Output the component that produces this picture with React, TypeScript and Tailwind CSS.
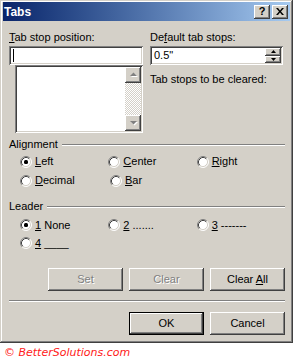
import React from 'react';

const raised =
  'shadow-[inset_-1px_-1px_#404040,inset_1px_1px_#ffffff,inset_-2px_-2px_#808080,inset_2px_2px_#d4d0c8]';
const sunken =
  'shadow-[inset_1px_1px_#808080,inset_-1px_-1px_#ffffff,inset_2px_2px_#404040,inset_-2px_-2px_#d4d0c8]';
const disabledText = 'text-[#808080] [text-shadow:1px_1px_0_#ffffff]';

function Radio({ checked }: { checked?: boolean }) {
  return (
    <svg width="12" height="12" viewBox="0 0 12 12" className="shrink-0">
      <circle cx="6" cy="6" r="5" fill="#ffffff" />
      <path d="M2.11 9.89A5.5 5.5 0 0 1 9.89 2.11" fill="none" stroke="#808080" />
      <path d="M9.89 2.11A5.5 5.5 0 0 1 2.11 9.89" fill="none" stroke="#ffffff" />
      <path d="M2.82 9.18A4.5 4.5 0 0 1 9.18 2.82" fill="none" stroke="#404040" />
      <path d="M9.18 2.82A4.5 4.5 0 0 1 2.82 9.18" fill="none" stroke="#d4d0c8" />
      {checked && <rect x="4" y="4" width="4" height="4" rx="1.5" fill="#000000" />}
    </svg>
  );
}

function Option({ checked, label }: { checked?: boolean; label: React.ReactNode }) {
  return (
    <div className="flex items-center gap-[3px] w-[90px]">
      <Radio checked={checked} />
      <span className="leading-[13px]">{label}</span>
    </div>
  );
}

function GroupHeader({ title }: { title: string }) {
  return (
    <div className="flex items-center gap-[4px] h-[13px]">
      <span className="leading-[13px]">{title}</span>
      <div className="flex-1 h-[2px] border-t border-[#808080] border-b border-b-white" />
    </div>
  );
}

function Button({
  children,
  disabled,
  isDefault,
}: {
  children: React.ReactNode;
  disabled?: boolean;
  isDefault?: boolean;
}) {
  if (isDefault) {
    return (
      <div className="w-[75px] h-[23px] border border-black">
        <div className={`w-full h-full flex items-center justify-center bg-[#d4d0c8] ${raised}`}>
          <span>{children}</span>
        </div>
      </div>
    );
  }
  return (
    <div
      className={`w-[75px] h-[23px] flex items-center justify-center bg-[#d4d0c8] ${raised} ${
        disabled ? disabledText : ''
      }`}
    >
      <span>{children}</span>
    </div>
  );
}

function ScrollArrow({ up }: { up?: boolean }) {
  return (
    <div className={`w-[16px] h-[16px] bg-[#d4d0c8] flex items-center justify-center ${raised}`}>
      <svg width="9" height="6" viewBox="0 0 9 6">
        {up ? (
          <>
            <path d="M2 5h7L5.5 1.5z" fill="#ffffff" />
            <path d="M1 4h7L4.5 0.5z" fill="#808080" />
          </>
        ) : (
          <>
            <path d="M2 2h7L5.5 5.5z" fill="#ffffff" />
            <path d="M1 1h7L4.5 4.5z" fill="#808080" />
          </>
        )}
      </svg>
    </div>
  );
}

export default function App() {
  return (
    <div className="w-[294px] h-[359px] bg-white text-[11px] text-black font-['Liberation_Sans',Arial,sans-serif] overflow-hidden">
      {/* dialog */}
      <div className="w-[293px] h-[343px] bg-[#d4d0c8] pt-[2px] px-[3px] shadow-[inset_-1px_-1px_#404040,inset_1px_1px_#d4d0c8,inset_-2px_-2px_#808080,inset_2px_2px_#ffffff]">
        {/* title bar */}
        <div className="h-[19px] flex items-center justify-between pl-[1px] pr-[2px] bg-linear-to-r from-[#0a246a] to-[#a6caf0]">
          <span className="font-bold text-white text-[12px] leading-[14px]">Tabs</span>
          <div className="flex items-center gap-[2px]">
            <div className={`w-[16px] h-[14px] bg-[#d4d0c8] flex items-center justify-center ${raised}`}>
              <span className="font-bold text-[11px] leading-[11px] pb-[1px]">?</span>
            </div>
            <div className={`w-[16px] h-[14px] bg-[#d4d0c8] flex items-center justify-center ${raised}`}>
              <svg width="8" height="7" viewBox="0 0 8 7">
                <path d="M0 0h2l2 2.5L6 0h2L5 3.5 8 7H6L4 4.5 2 7H0l3-3.5z" fill="#000000" />
              </svg>
            </div>
          </div>
        </div>

        {/* body */}
        <div className="pl-[6px] pr-[5px]">
          <div className="flex gap-[7px] pt-[10px]">
            {/* left column */}
            <div className="w-[134px]">
              <div className="leading-[13px]">
                <u>T</u>ab stop position:
              </div>
              <div className={`mt-[2px] h-[19px] bg-white ${sunken} flex items-center pl-[4px]`}>
                <div className="w-px h-[13px] bg-black" />
              </div>
              <div className={`ml-[6px] h-[68px] bg-white ${sunken} p-[2px] flex justify-end`}>
                <div className="w-[16px] flex flex-col bg-[repeating-conic-gradient(#d4d0c8_0_25%,#ffffff_0_50%)] bg-[length:2px_2px]">
                  <ScrollArrow up />
                  <div className="flex-1" />
                  <ScrollArrow />
                </div>
              </div>
            </div>

            {/* right column */}
            <div className="w-[134px]">
              <div className="leading-[13px]">
                De<u>f</u>ault tab stops:
              </div>
              <div className={`mt-[2px] w-[133px] h-[19px] bg-white ${sunken} flex items-center justify-between pl-[4px] pr-[2px]`}>
                <span className="leading-[13px]">0.5"</span>
                <div className="flex flex-col h-[15px] w-[16px]">
                  <div className={`flex-1 bg-[#d4d0c8] flex items-center justify-center ${raised}`}>
                    <svg width="5" height="3" viewBox="0 0 5 3">
                      <path d="M0 3h5L2.5 0z" fill="#000000" />
                    </svg>
                  </div>
                  <div className={`flex-1 bg-[#d4d0c8] flex items-center justify-center ${raised}`}>
                    <svg width="5" height="3" viewBox="0 0 5 3">
                      <path d="M0 0h5L2.5 3z" fill="#000000" />
                    </svg>
                  </div>
                </div>
              </div>
              <div className="mt-[8px] leading-[13px]">Tab stops to be cleared:</div>
            </div>
          </div>

          {/* alignment */}
          <div className="mt-[5px]">
            <GroupHeader title="Alignment" />
            <div className="mt-[1px] pl-[11px]">
              <div className="flex h-[19px] items-center">
                <Option checked label={<><u>L</u>eft</>} />
                <Option label={<><u>C</u>enter</>} />
                <Option label={<><u>R</u>ight</>} />
              </div>
              <div className="flex h-[19px] items-center">
                <Option label={<><u>D</u>ecimal</>} />
                <Option label={<><u>B</u>ar</>} />
              </div>
            </div>
          </div>

          {/* leader */}
          <div className="mt-[10px]">
            <GroupHeader title="Leader" />
            <div className="mt-[3px] pl-[11px]">
              <div className="flex h-[18px] items-center">
                <Option checked label={<><u>1</u> None</>} />
                <Option label={<><u>2</u> .......</>} />
                <Option label={<><u>3</u> -------</>} />
              </div>
              <div className="flex h-[18px] items-center">
                <Option label={<><u>4</u> ____</>} />
              </div>
            </div>
          </div>

          <div className="mt-[16px] flex justify-end gap-[6px]">
            <Button disabled>Set</Button>
            <Button disabled>Clear</Button>
            <Button>
              Clear <u>A</u>ll
            </Button>
          </div>

          <div className="mt-[9px] h-[2px] border-t border-[#808080] border-b border-b-white" />

          <div className="mt-[10px] flex justify-end gap-[6px]">
            <Button isDefault>OK</Button>
            <Button>Cancel</Button>
          </div>
        </div>
      </div>

      <div className="pl-[4px] pt-[3px] italic text-[11px] leading-[13px] text-[#ff2020] font-['DejaVu_Sans',Verdana,sans-serif]">
        © BetterSolutions.com
      </div>
    </div>
  );
}
